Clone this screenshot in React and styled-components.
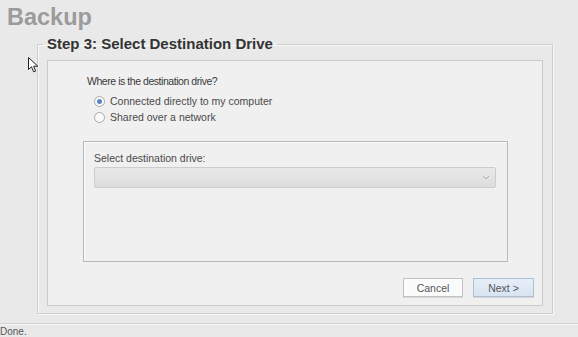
import React from "react";
import styled, { createGlobalStyle } from "styled-components";

const GlobalStyle = createGlobalStyle`
  html, body {
    margin: 0;
    padding: 0;
    background: #e9e9e9;
  }
  body {
    font-family: "Liberation Sans", Arial, sans-serif;
    color: #3c3c3c;
  }
`;

const Page = styled.div`
  position: relative;
  width: 578px;
  height: 337px;
  overflow: hidden;
  display: flex;
  flex-direction: column;
  & > * {
    flex-shrink: 0;
  }
`;

const Title = styled.h1`
  margin: 0;
  height: 36px;
  padding: 2px 0 0 7px;
  box-sizing: border-box;
  font-size: 23.5px;
  line-height: 30px;
  font-weight: bold;
  color: #9b9b9b;
`;

const Fieldset = styled.fieldset`
  margin: 0 25px 0 37px;
  padding: 8px 9px 7px 9px;
  border: 1px solid #cfcfcf;
  box-shadow: inset 1px 1px 0 #f8f8f8, 1px 1px 0 #f8f8f8;
  min-width: 0;
`;

const Legend = styled.legend`
  margin-left: -4px;
  padding: 0 4px;
  font-size: 15px;
  line-height: 16px;
  font-weight: bold;
  color: #333333;
`;

const Panel = styled.div`
  display: flex;
  flex-direction: column;
  height: 246px;
  box-sizing: border-box;
  padding: 13px 34px 8px 35px;
  background: #f0f0f0;
  border: 1px solid #cacaca;
`;

const Question = styled.div`
  margin-left: 4px;
  font-size: 10.5px;
  line-height: 14px;
  letter-spacing: -0.45px;
  color: #3a3a3a;
`;

const Radios = styled.div`
  margin: 5px 0 16px 11px;
  display: flex;
  flex-direction: column;
`;

const RadioRow = styled.label`
  display: flex;
  align-items: center;
  gap: 5px;
  height: 16px;
  font-size: 10.5px;
  color: #4a4a4a;
`;

const Dot = styled.span`
  width: 9px;
  height: 9px;
  border-radius: 50%;
  border: 1px solid #a8a8a8;
  background: #fbfbfb;
  display: flex;
  align-items: center;
  justify-content: center;
  &::after {
    content: "";
    width: 5px;
    height: 5px;
    border-radius: 50%;
    background: ${(p) => (p.$checked ? "#5a86c4" : "transparent")};
  }
`;

const Group = styled.div`
  height: 123px;
  box-sizing: border-box;
  padding: 9px 11px 0 10px;
  border: 1px solid #b9b9b9;
  box-shadow: inset 1px 1px 0 #fafafa;
`;

const GroupLabel = styled.div`
  font-size: 10.5px;
  line-height: 14px;
  color: #4a4a4a;
  margin-bottom: 2px;
`;

const Combo = styled.div`
  height: 21px;
  box-sizing: border-box;
  border: 1px solid #cdcdcd;
  border-radius: 2px;
  background: linear-gradient(#e9e9e9, #dddddd);
  display: flex;
  align-items: center;
  justify-content: flex-end;
  padding-right: 5px;
`;

const Buttons = styled.div`
  margin: 16px -26px 0 0;
  display: flex;
  justify-content: flex-end;
  gap: 10px;
`;

const Button = styled.button`
  width: ${(p) => (p.$primary ? "61px" : "60px")};
  height: 19px;
  padding: 0;
  font-family: inherit;
  font-size: 10.5px;
  color: #555555;
  border: 1px solid ${(p) => (p.$primary ? "#aebfd3" : "#c2c2c2")};
  background: ${(p) =>
    p.$primary ? "linear-gradient(#e6eef8, #d8e4f1)" : "#fbfbfb"};
  box-shadow: 0 1px 0 #d6d6d6;
`;

const StatusBar = styled.div`
  margin-top: 9px;
  border-top: 1px solid #d2d2d2;
  box-shadow: inset 0 1px 0 #f6f6f6;
  padding: 2px 0 0 0;
  font-size: 10px;
  line-height: 12px;
  color: #555555;
`;

const Cursor = styled.svg`
  position: absolute;
  left: 28px;
  top: 57px;
`;

const Radio = ({ checked, children }) => (
  <RadioRow>
    <Dot $checked={checked} />
    {children}
  </RadioRow>
);

export default function App() {
  return (
    <Page>
      <GlobalStyle />
      <Title>Backup</Title>
      <Fieldset>
        <Legend>Step 3: Select Destination Drive</Legend>
        <Panel>
          <Question>Where is the destination drive?</Question>
          <Radios>
            <Radio checked>Connected directly to my computer</Radio>
            <Radio>Shared over a network</Radio>
          </Radios>
          <Group>
            <GroupLabel>Select destination drive:</GroupLabel>
            <Combo>
              <svg width="8" height="5" viewBox="0 0 8 5">
                <path d="M1 1 L4 4 L7 1" fill="none" stroke="#aaaaaa" strokeWidth="1" />
              </svg>
            </Combo>
          </Group>
          <Buttons>
            <Button>Cancel</Button>
            <Button $primary>Next &gt;</Button>
          </Buttons>
        </Panel>
      </Fieldset>
      <StatusBar>Done.</StatusBar>
      <Cursor width="11" height="16" viewBox="0 0 11 16">
        <path
          d="M0.5 0.5 L0.5 12.5 L3.5 9.8 L5.6 14.8 L7.6 14 L5.6 9.2 L9.8 9.2 Z"
          fill="#ffffff"
          stroke="#222222"
          strokeWidth="1"
          strokeLinejoin="round"
        />
      </Cursor>
    </Page>
  );
}
